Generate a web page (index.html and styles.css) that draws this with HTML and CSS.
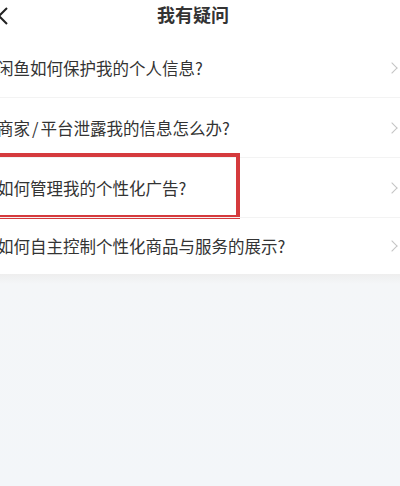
FILE: index.html
```html
<!DOCTYPE html>
<html lang="zh-CN">
<head>
    <meta charset="UTF-8">
    <meta name="viewport" content="width=device-width, initial-scale=1.0">
    <title>我有疑问</title>
    <link rel="stylesheet" href="styles.css">
</head>
<body>
    <!-- Header -->
    <header class="top-bar">
        <span class="back">
            <svg width="14" height="20" viewBox="0 0 14 20"><path d="M7 2 L-1 10 L7 18" fill="none" stroke="#222" stroke-width="2"/></svg>
        </span>
        <h1 class="title">我有疑问</h1>
    </header>

    <!-- Question list -->
    <ul class="faq-list">
        <li class="faq-item">
            <span class="faq-text">闲鱼如何保护我的个人信息?</span>
            <span class="chevron"></span>
        </li>
        <li class="faq-item">
            <span class="faq-text">商家<span class="slash">/</span>平台泄露我的信息怎么办?</span>
            <span class="chevron"></span>
        </li>
        <li class="faq-item highlighted">
            <span class="faq-text">如何管理我的个性化广告?</span>
            <span class="chevron"></span>
            <span class="mark-box"></span>
        </li>
        <li class="faq-item">
            <span class="faq-text">如何自主控制个性化商品与服务的展示?</span>
            <span class="chevron"></span>
        </li>
    </ul>

    <div class="rest"></div>
</body>
</html>
```

FILE: styles.css
```css
/* General Styles */
body {
    margin: 0;
    padding: 0;
    width: 400px;
    height: 486px;
    overflow: hidden;
    background-color: #f3f6f9;
    font-family: "Noto Sans CJK SC", "Noto Sans", sans-serif;
    color: #333;
    display: flex;
    flex-direction: column;
}

/* Header */
.top-bar {
    background-color: #fff;
    height: 38px;
    display: flex;
    align-items: center;
    justify-content: center;
    position: relative;
}

.back {
    position: absolute;
    left: 0;
    top: 6px;
    line-height: 0;
}

.title {
    margin: 0 0 10px 0;
    font-size: 18px;
    font-weight: bold;
    color: #333;
    padding-right: 14px;
}

/* List */
.faq-list {
    list-style: none;
    margin: 0;
    padding: 0;
    background-color: #fff;
}

.faq-item {
    position: relative;
    height: 59px;
    display: flex;
    align-items: center;
    justify-content: space-between;
    padding-right: 4px;
}

.faq-item + .faq-item {
    border-top: 1px solid #f3f3f3;
}

.faq-item:last-child {
    height: 56px;
}

.faq-text {
    font-size: 16.5px;
    margin-left: -3px;
    color: #333;
}

.slash {
    margin: 0 2px;
}

.chevron {
    width: 7px;
    height: 7px;
    border-top: 1.5px solid #c4c4c4;
    border-right: 1.5px solid #c4c4c4;
    transform: rotate(45deg);
}

/* Red highlight drawn over the third row */
.mark-box {
    position: absolute;
    left: -10px;
    top: -5px;
    width: 242px;
    height: 58px;
    border: 4px solid #d53a3d;
    box-sizing: content-box;
}

.rest {
    flex: 1;
    background: linear-gradient(#eeeeee, #f4f6f8 10px, #f3f6f9);
}
```
